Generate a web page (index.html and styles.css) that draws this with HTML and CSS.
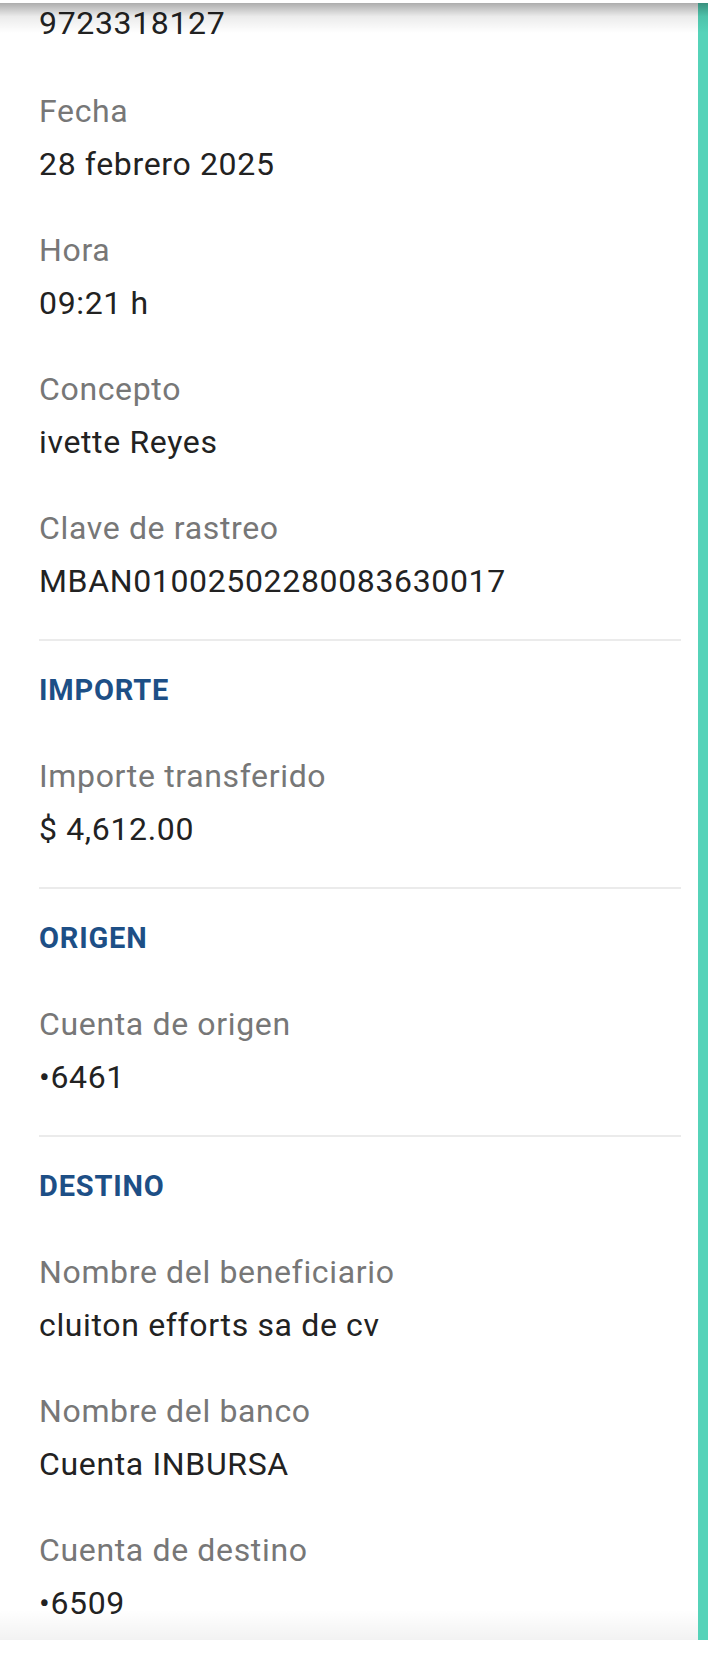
FILE: index.html
```html
<!DOCTYPE html>
<html lang="es">
  <head>
    <meta charset="UTF-8" />
    <meta name="viewport" content="width=device-width, initial-scale=1.0" />
    <title>Detalle de transferencia</title>
    <link rel="stylesheet" href="styles.css">
  </head>
  <body>
    <div class="screen">
      <div class="content">
        <div class="section">
          <div class="value cut">9723318127</div>
          <div class="field">
            <div class="label">Fecha</div>
            <div class="value">28 febrero 2025</div>
          </div>
          <div class="field">
            <div class="label">Hora</div>
            <div class="value">09:21 h</div>
          </div>
          <div class="field">
            <div class="label">Concepto</div>
            <div class="value">ivette Reyes</div>
          </div>
          <div class="field">
            <div class="label">Clave de rastreo</div>
            <div class="value">MBAN01002502280083630017</div>
          </div>
        </div>

        <div class="section">
          <h2 class="heading">IMPORTE</h2>
          <div class="field">
            <div class="label">Importe transferido</div>
            <div class="value">$ 4,612.00</div>
          </div>
        </div>

        <div class="section">
          <h2 class="heading">ORIGEN</h2>
          <div class="field">
            <div class="label">Cuenta de origen</div>
            <div class="value">&bull;6461</div>
          </div>
        </div>

        <div class="section last">
          <h2 class="heading">DESTINO</h2>
          <div class="field">
            <div class="label">Nombre del beneficiario</div>
            <div class="value">cluiton efforts sa de cv</div>
          </div>
          <div class="field">
            <div class="label">Nombre del banco</div>
            <div class="value">Cuenta INBURSA</div>
          </div>
          <div class="field">
            <div class="label">Cuenta de destino</div>
            <div class="value">&bull;6509</div>
          </div>
        </div>
      </div>
      <div class="scrollbar"></div>

      <!-- shadow of the app bar above, lies over the list -->
      <div class="top-shadow"></div>
      <div class="bottom-fade"></div>
    </div>
  </body>
</html>
```

FILE: styles.css
```css
body {
  margin: 0;
  background: #ffffff;
  font-family: Roboto, "Noto Sans", Arial, sans-serif;
  overflow: hidden;
}
.screen {
  position: relative;
  display: flex;
  margin-top: 3px;
  height: 1637px;
  background: #ffffff;
  overflow: hidden;
}
.content {
  flex: 1;
  padding: 0 17px 0 39px;
}
.scrollbar {
  width: 10px;
  background: #56d3b9;
}
.section {
  display: flex;
  flex-direction: column;
  gap: 46px;
  padding: 29px 0 38px;
  border-bottom: 2px solid #ebebeb;
}
.section:first-child {
  padding-top: 0;
}
.section.last {
  border-bottom: none;
  padding-bottom: 16px;
}
.field {
  display: flex;
  flex-direction: column;
  gap: 13px;
}
.label,
.value {
  font-size: 32px;
  line-height: 40px;
  letter-spacing: 0.65px;
  white-space: nowrap;
}
.label {
  color: #777777;
}
.value {
  color: #222222;
}
.value.cut {
  margin-bottom: 2px;
}
.heading {
  margin: 0;
  font-size: 29px;
  line-height: 40px;
  font-weight: 700;
  letter-spacing: 0.8px;
  color: #1d4f86;
}
.top-shadow {
  position: absolute;
  left: 0;
  right: 0;
  top: 0;
  height: 30px;
  background: linear-gradient(rgba(0, 0, 0, 0.32), rgba(0, 0, 0, 0.08) 45%, rgba(0, 0, 0, 0));
}
.bottom-fade {
  position: absolute;
  left: 0;
  right: 10px;
  bottom: 0;
  height: 30px;
  background: linear-gradient(rgba(0, 0, 0, 0), rgba(0, 0, 0, 0.05));
}
```
